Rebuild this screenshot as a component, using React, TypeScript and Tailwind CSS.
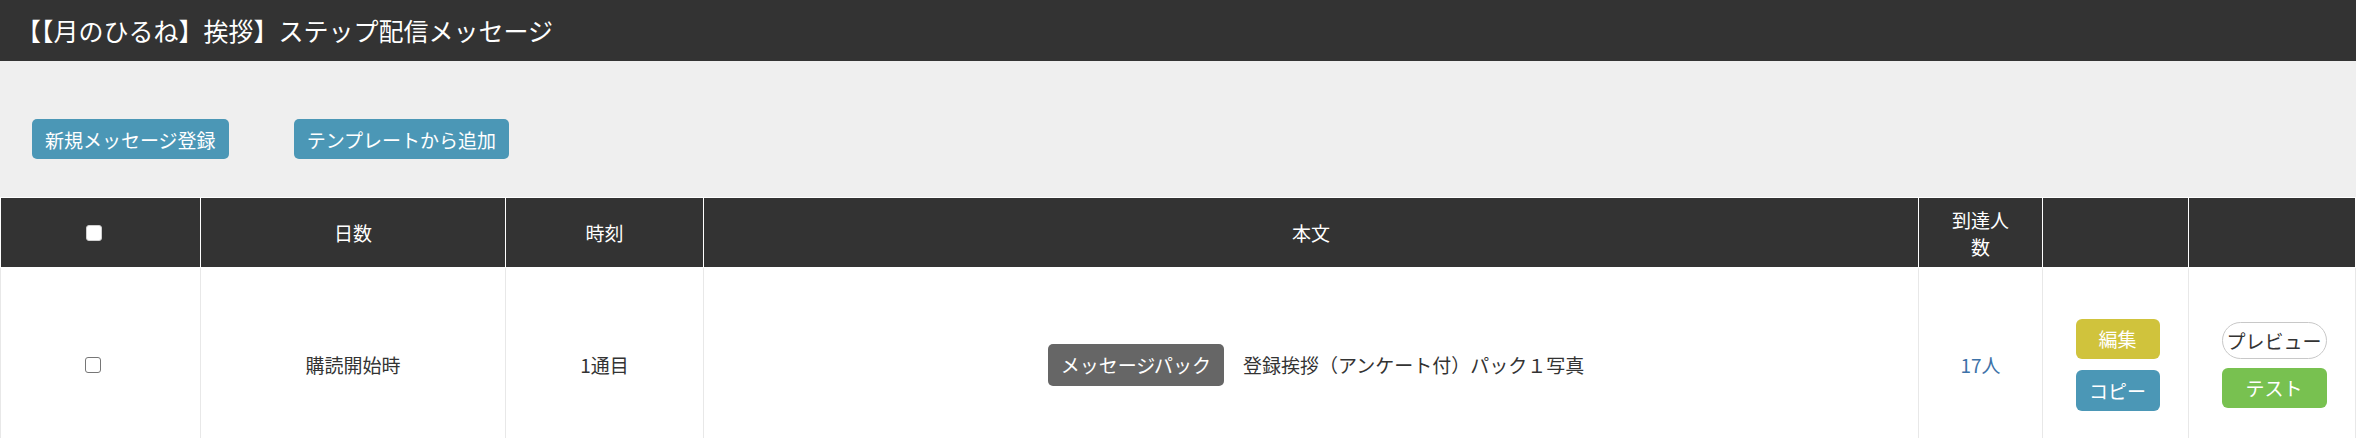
import React from 'react';

const font = { fontFamily: '"Noto Sans CJK JP", "Noto Sans", sans-serif' };

const Checkbox: React.FC<{ dark?: boolean }> = ({ dark }) => (
  <span
    className={`inline-block w-[16px] h-[16px] rounded-[3px] border ${
      dark ? 'bg-white border-[#cfcfcf]' : 'bg-white border-[#767676]'
    }`}
  />
);

const App: React.FC = () => {
  return (
    <div className="w-[2356px] h-[438px] overflow-hidden bg-[#efefef] text-[#333]" style={font}>
      <header className="h-[61px] bg-[#333333] flex items-center pl-[16px]">
        <h1 className="text-white text-[25px] leading-none font-normal">
          【【月のひるね】挨拶】ステップ配信メッセージ
        </h1>
      </header>

      <div className="flex items-center gap-[65px] pl-[32px] pt-[58px] pb-[38px]">
        <button className="h-[40px] px-[13px] rounded-[5px] bg-[#4b97b6] text-white text-[19px] leading-none">
          新規メッセージ登録
        </button>
        <button className="h-[40px] px-[13px] rounded-[5px] bg-[#4b97b6] text-white text-[19px] leading-none">
          テンプレートから追加
        </button>
      </div>

      <table className="table-fixed border-collapse w-[2355px] text-[19px]">
        <colgroup>
          <col className="w-[200px]" />
          <col className="w-[305px]" />
          <col className="w-[198px]" />
          <col className="w-[1215px]" />
          <col className="w-[124px]" />
          <col className="w-[146px]" />
          <col className="w-[167px]" />
        </colgroup>
        <thead>
          <tr className="h-[70px] bg-[#333333] text-white">
            <th className="border border-white font-normal text-center align-middle pr-[14px]">
              <div className="flex justify-center items-center">
                <Checkbox dark />
              </div>
            </th>
            <th className="border border-white font-normal leading-[27px]">日数</th>
            <th className="border border-white font-normal leading-[27px]">時刻</th>
            <th className="border border-white font-normal leading-[27px]">本文</th>
            <th className="border border-white font-normal leading-[27px]">
              到達人
              <br />
              数
            </th>
            <th className="border border-white font-normal" />
            <th className="border border-white font-normal" />
          </tr>
        </thead>
        <tbody>
          <tr className="h-[194px] bg-white">
            <td className="border border-[#e8e8e8] text-center align-middle pr-[16px]">
              <div className="flex justify-center items-center">
                <Checkbox />
              </div>
            </td>
            <td className="border border-[#e8e8e8] text-center leading-[27px]">購読開始時</td>
            <td className="border border-[#e8e8e8] text-center leading-[27px]">1通目</td>
            <td className="border border-[#e8e8e8] text-center">
              <div className="flex items-center justify-center gap-[19px] pl-[10px]">
                <span className="h-[42px] px-[13px] rounded-[5px] bg-[#666666] text-white flex items-center leading-none">
                  メッセージパック
                </span>
                <span className="leading-[27px]">登録挨拶（アンケート付）パック１写真</span>
              </div>
            </td>
            <td className="border border-[#e8e8e8] text-center text-[#3d72a8] leading-[27px]">17人</td>
            <td className="border border-[#e8e8e8]">
              <div className="flex flex-col items-center gap-[11px] pl-[4px]">
                <button className="w-[84px] h-[40px] rounded-[6px] bg-[#d0c33c] text-white leading-none">
                  編集
                </button>
                <button className="w-[84px] h-[41px] rounded-[6px] bg-[#4b97b6] text-white leading-none">
                  コピー
                </button>
              </div>
            </td>
            <td className="border border-[#e8e8e8]">
              <div className="flex flex-col items-center gap-[9px] pl-[4px]">
                <button className="w-[105px] h-[37px] rounded-full border border-[#c8c8c8] bg-white text-[#333] leading-none">
                  プレビュー
                </button>
                <button className="w-[105px] h-[40px] rounded-[6px] bg-[#78c150] text-white leading-none">
                  テスト
                </button>
              </div>
            </td>
          </tr>
        </tbody>
      </table>
    </div>
  );
};

export default App;
